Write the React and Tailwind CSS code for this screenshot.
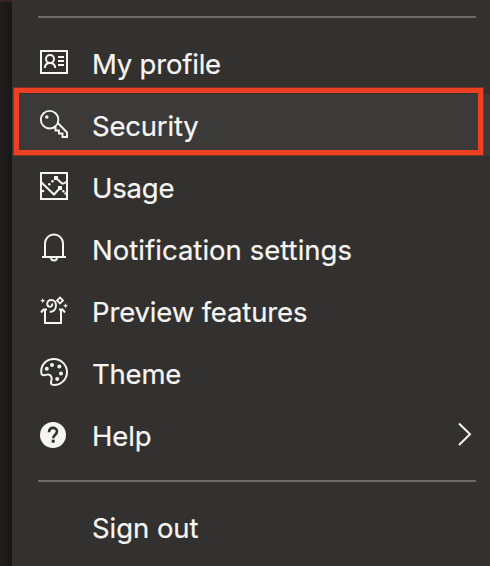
import React from "react";

function Icon({ children }) {
  return (
    <svg
      viewBox="0 0 32 32"
      className="h-8 w-8 shrink-0"
      fill="none"
      stroke="#f6f5f3"
      strokeWidth="2"
      aria-hidden="true"
    >
      {children}
    </svg>
  );
}

const ProfileIcon = () => (
  <Icon>
    <rect x="3" y="4" width="26" height="22" />
    <circle cx="12" cy="12" r="4" />
    <path d="M6.8 21C7 17.8 9 16 12 16s5 1.8 5.2 5M20 10h6M20 14h6M20 18h6" />
  </Icon>
);

const KeyIcon = () => (
  <Icon>
    <path d="M19.800 14 29 23.500V28h-4.500v-3.500H21V21.500H17.500V18.500H15" strokeWidth="1.9" />
    <circle cx="11.600" cy="10.700" r="8.800" strokeWidth="1.9" />
    <circle cx="8.800" cy="8" r="1.800" fill="#f6f5f3" stroke="none" />
  </Icon>
);

const UsageIcon = () => (
  <Icon>
    <rect x="3" y="2" width="26" height="26" />
    <path d="m3 11 13 12.500 6-6.500M18 7l6 5.500h1.500L29 10.500" strokeWidth="2" />
    <g fill="#f6f5f3" stroke="none">
      <path d="M16 5h4v4h-4zM20 15h4v4h-4z" />
      <circle cx="14.500" cy="10.300" r="1.300" />
      <circle cx="11.300" cy="13.300" r="1.300" />
      <circle cx="5" cy="20" r="1.300" />
      <circle cx="25.300" cy="20.300" r="1.300" />
      <circle cx="27.500" cy="22.500" r="1.200" />
    </g>
  </Icon>
);

const BellIcon = () => (
  <Icon>
    <path d="M4 24h24M7 24V10.500a9 9 0 0 1 18 0V24M13 24.500a3 3 0 0 0 6 0" />
  </Icon>
);

const PreviewIcon = () => (
  <Icon>
    <path d="m3 17.500 2.500-3H9M7 14.500V28h16V14.500M21 14.500h3.500l2.500 3" />
    <path d="M14 8.500c.8 1.800-.3 3.300-1.900 3.300-1.700 0-2.900-1.300-2.900-3C9.200 6.500 11 5 13.200 5c2.900 0 4.800 2.200 4.800 5.200 0 3.600-2.500 6.300-6.200 6.800" strokeWidth="1.900" />
    <path d="m22 2.500 3 3-3 3-3-3z" strokeWidth="1.800" />
    <path d="m4.700 3.200.8 1.700 1.700.8-1.700.8-.8 1.700-.8-1.700-1.700-.8 1.700-.8zM27.500 8.200l.8 1.700 1.700.8-1.700.8-.8 1.700-.8-1.700-1.700-.8 1.700-.8z" fill="#f6f5f3" stroke="none" />
  </Icon>
);

const PaletteIcon = () => (
  <Icon>
    <path d="M3.200 14.500C3.200 7 9 2 16 2s13 6 13 13-5.500 13-13 13c-2.600 0-3.300-1.200-3-3 .4-1.600 1.100-3 .5-4.700-.7-2-2.800-3.300-4.600-2.700-1.200.3-2.100.9-3.400.7-1.800-.2-2.300-1.800-2.300-3.800Z" />
    <g fill="#f6f5f3" stroke="none">
      <circle cx="8.800" cy="11.700" r="2" />
      <circle cx="14" cy="8" r="2" />
      <circle cx="21.300" cy="9.500" r="2" />
      <circle cx="23" cy="16.500" r="2" />
      <circle cx="19.200" cy="22" r="2" />
    </g>
  </Icon>
);

const HelpIcon = () => (
  <Icon>
    <circle cx="15" cy="16" r="13" fill="#f6f5f3" stroke="none" />
    <path d="M11 13.200c0-2.900 1.700-4.300 4-4.300s4 1.500 4 3.700c0 3-3.700 3.300-3.700 6.600" stroke="#323130" strokeWidth="2.600" />
    <path d="M13.700 20.700h3v3h-3z" fill="#323130" stroke="none" />
  </Icon>
);

const items = [
  { label: "My profile", icon: ProfileIcon, track: "tracking-[-0.2px]" },
  { label: "Security", icon: KeyIcon, track: "tracking-[-0.2px]", active: true },
  { label: "Usage", icon: UsageIcon, track: "tracking-[-0.2px]" },
  { label: "Notification settings", icon: BellIcon, track: "tracking-[0.03px]" },
  { label: "Preview features", icon: PreviewIcon, track: "tracking-[-0.15px]" },
  { label: "Theme", icon: PaletteIcon, track: "tracking-[-0.2px]" },
  { label: "Help", icon: HelpIcon, track: "tracking-[-0.1px]", submenu: true },
];

function MenuItem({ label, icon: ItemIcon, track, active, submenu }) {
  return (
    <li
      className={`relative flex h-[62px] items-center pl-[26px] ${active ? "bg-[#3b3a39]" : ""}`}
    >
      <ItemIcon />
      <span className={`ml-[22px] pt-1 whitespace-nowrap ${track}`}>{label}</span>
      {submenu && (
        <svg
          viewBox="0 0 16 26"
          className="mr-[17px] ml-auto h-[26px] w-4"
          fill="none"
          stroke="#f6f5f3"
          strokeWidth="2"
          aria-hidden="true"
        >
          <path d="M2 1.500 13 12.300 2 23" />
        </svg>
      )}
      {active && (
        <div className="pointer-events-none absolute -top-[7px] left-px h-[69px] w-[471px] border border-[#7b3529]">
          <div className="h-full border-5 border-[#ee4023]" />
        </div>
      )}
    </li>
  );
}

export default function App() {
  return (
    <div className="flex h-[566px] w-[490px] overflow-hidden bg-[#323130] font-[Inter,sans-serif] text-[27.5px] leading-none text-[#f6f5f3] [-webkit-text-stroke:0.2px_#f6f5f3]">
      <div className="w-3 shrink-0 border-t-2 border-[#3a2224] bg-linear-to-r from-[#1f1e1c] to-[#191816]" />
      <nav className="grow pt-4">
        <hr className="mr-[14px] ml-[26px] h-0.5 border-0 bg-[#6d6c6b]" />
        <ul className="pt-[14px] pb-[14px]">
          {items.map((item) => (
            <MenuItem key={item.label} {...item} />
          ))}
        </ul>
        <hr className="mr-[14px] ml-[26px] h-0.5 border-0 bg-[#6d6c6b]" />
        <div className="mt-[14px] flex h-[62px] items-center pl-20">
          <span className="pt-1 tracking-[-0.05px]">Sign out</span>
        </div>
      </nav>
    </div>
  );
}
